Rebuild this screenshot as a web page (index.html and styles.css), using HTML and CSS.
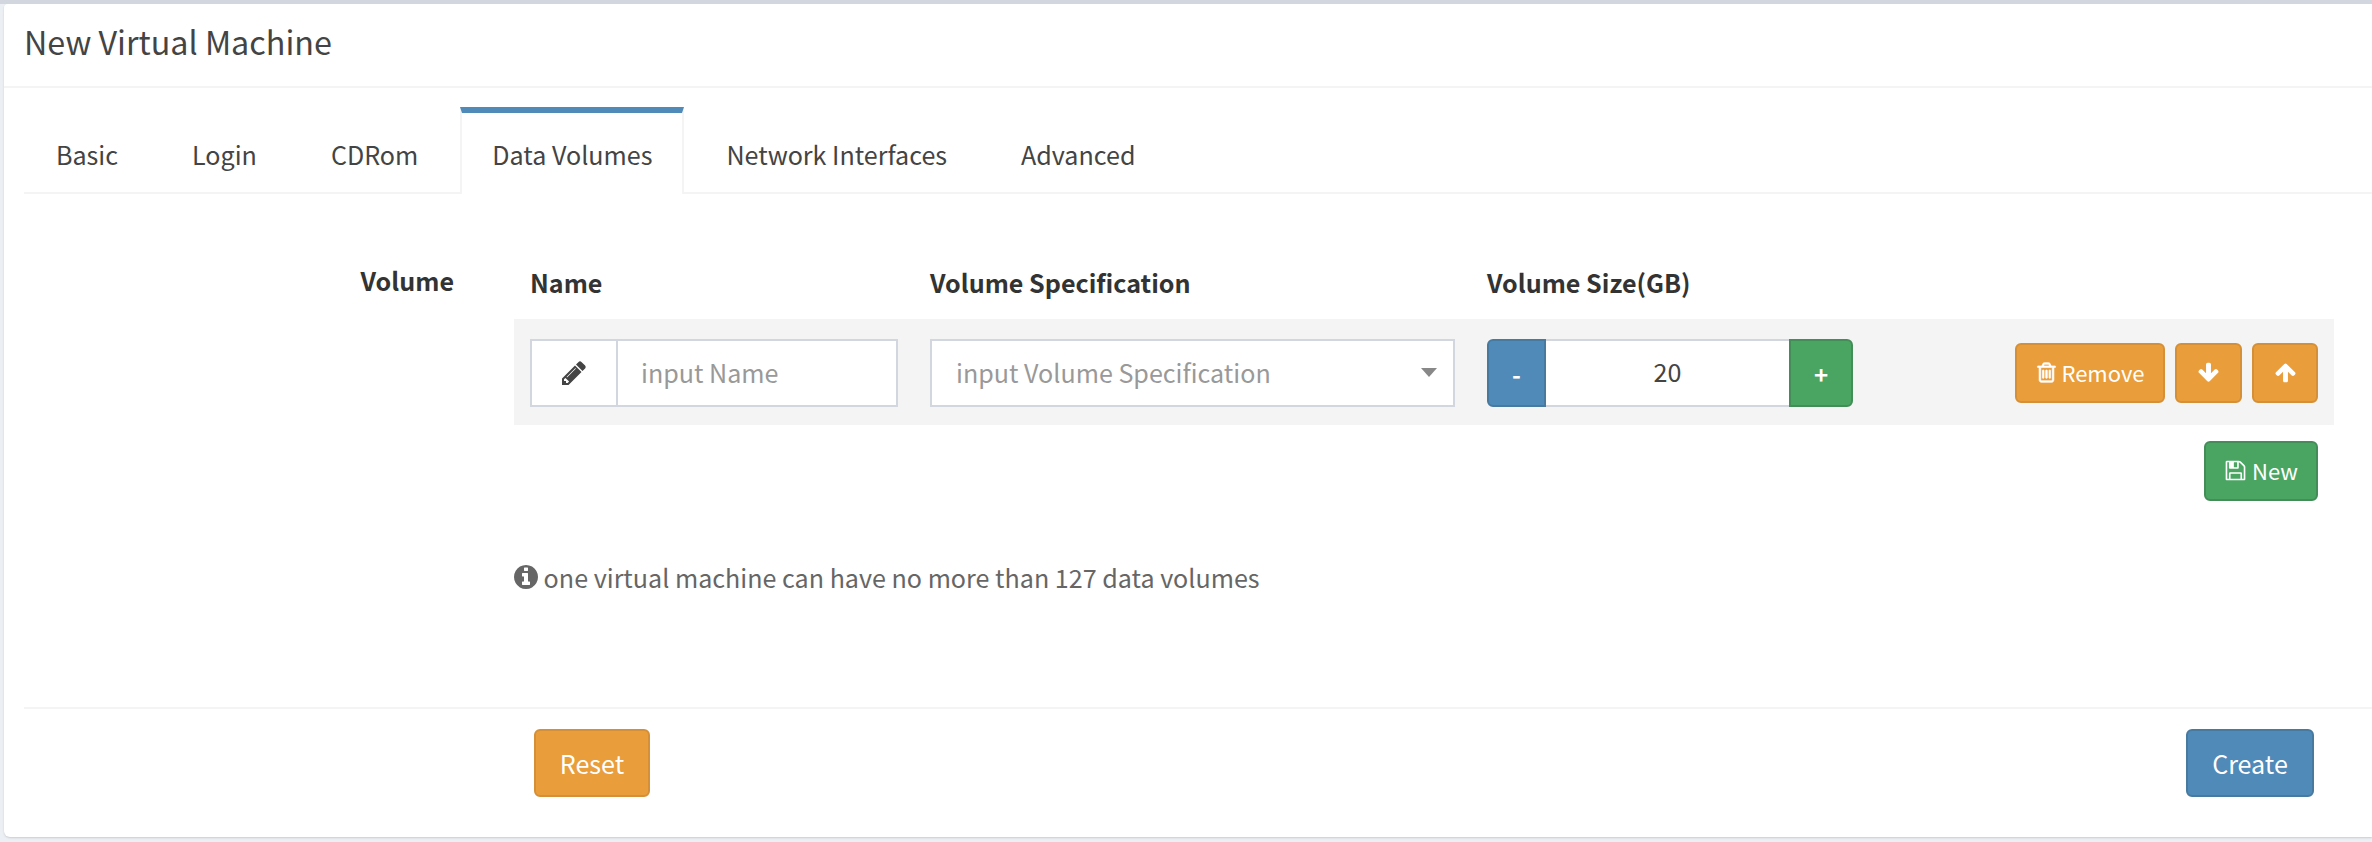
FILE: index.html
```html
<!DOCTYPE html>
<html lang="en">
<head>
    <meta charset="UTF-8">
    <meta name="viewport" content="width=device-width, initial-scale=1.0">
    <title>New Virtual Machine</title>
    <link rel="stylesheet" href="styles.css">
</head>
<body>

<div class="card">
    <div class="card-title">New Virtual Machine</div>

    <div class="tabs">
        <div class="tab">Basic</div>
        <div class="tab">Login</div>
        <div class="tab">CDRom</div>
        <div class="tab active">Data Volumes</div>
        <div class="tab">Network Interfaces</div>
        <div class="tab">Advanced</div>
    </div>

    <div class="form">
        <div class="form-label">Volume</div>
        <div class="form-body">
            <div class="vol-grid vol-head">
                <div>Name</div>
                <div>Volume Specification</div>
                <div>Volume Size(GB)</div>
            </div>

            <div class="vol-grid vol-row">
                <div class="input-group">
                    <span class="addon">
                        <svg class="icon" viewBox="0 0 1792 1792"><path d="M491 1536l91-91-235-235-91 91v107h128v128h107zm523-928q0-22-22-22-10 0-17 7l-542 542q-7 7-7 17 0 22 22 22 10 0 17-7l542-542q7-7 7-17zm-54-192l416 416-832 832h-416v-416zm683 96q0 53-37 90l-166 166-416-416 166-165q36-38 90-38 53 0 91 38l235 234q37 39 37 91z"/></svg>
                    </span>
                    <input class="text-input" type="text" placeholder="input Name">
                </div>
                <div class="select">
                    <span>input Volume Specification</span>
                    <span class="caret"></span>
                </div>
                <div class="spinner">
                    <button class="btn-blue spin-minus">-</button>
                    <div class="spin-value">20</div>
                    <button class="btn-green spin-plus">+</button>
                </div>
                <div class="actions">
                    <button class="btn btn-orange btn-remove">
                        <svg class="icon icon-bold" viewBox="0 0 1792 1792"><path d="M704 736v576q0 14-9 23t-23 9h-64q-14 0-23-9t-9-23v-576q0-14 9-23t23-9h64q14 0 23 9t9 23zm256 0v576q0 14-9 23t-23 9h-64q-14 0-23-9t-9-23v-576q0-14 9-23t23-9h64q14 0 23 9t9 23zm256 0v576q0 14-9 23t-23 9h-64q-14 0-23-9t-9-23v-576q0-14 9-23t23-9h64q14 0 23 9t9 23zm128 724v-948h-896v948q0 22 7 40.5t14.5 27 10.5 8.5h832q3 0 10.5-8.5t14.5-27 7-40.5zm-672-1076h448l-48-117q-7-9-17-11h-317q-10 2-17 11zm928 32v64q0 14-9 23t-23 9h-96v948q0 83-47 143.5t-113 60.5h-832q-66 0-113-58.5t-47-141.5v-952h-96q-14 0-23-9t-9-23v-64q0-14 9-23t23-9h309l70-167q15-37 54-63t79-26h320q40 0 79 26t54 63l70 167h309q14 0 23 9t9 23z"/></svg>
                        Remove
                    </button>
                    <button class="btn btn-orange btn-arrow">
                        <svg class="icon" viewBox="0 0 1792 1792"><path d="M1675 832q0 53-37 90l-651 652q-39 37-91 37-53 0-90-37l-651-652q-38-36-38-90 0-53 38-91l74-75q39-37 91-37 53 0 90 37l294 294v-704q0-52 38-90t90-38h128q52 0 90 38t38 90v704l294-294q37-37 90-37 52 0 91 37l75 75q37 39 37 91z"/></svg>
                    </button>
                    <button class="btn btn-orange btn-arrow btn-up">
                        <svg class="icon" viewBox="0 0 1792 1792"><path d="M1675 971q0 51-37 90l-75 75q-38 38-91 38-54 0-90-38l-294-293v704q0 52-37.5 84.5t-90.5 32.5h-128q-53 0-90.5-32.5t-37.5-84.5v-704l-294 293q-36 38-90 38t-90-38l-75-75q-38-38-38-90 0-53 38-91l651-651q35-37 90-37 54 0 91 37l651 651q37 39 37 91z"/></svg>
                    </button>
                </div>
            </div>

            <div class="new-row">
                <button class="btn btn-green">
                    <svg class="icon" viewBox="0 0 1792 1792"><path d="M512 1536h768v-384h-768v384zm896 0h128v-896q0-14-10-38.5t-20-34.5l-281-281q-10-10-34-20t-39-10v416q0 40-28 68t-68 28h-576q-40 0-68-28t-28-68v-416h-128v1280h128v-416q0-40 28-68t68-28h832q40 0 68 28t28 68v416zm-384-928v-320q0-13-9.5-22.5t-22.5-9.5h-192q-13 0-22.5 9.5t-9.5 22.5v320q0 13 9.5 22.5t22.5 9.5h192q13 0 22.5-9.5t9.5-22.5zm640 32v928q0 40-28 68t-68 28h-1344q-40 0-68-28t-28-68v-1344q0-40 28-68t68-28h928q40 0 88 20t76 48l280 280q28 28 48 76t20 88z"/></svg>
                    New
                </button>
            </div>

            <div class="note">
                <svg class="icon" viewBox="0 0 1792 1792"><path d="M1152 1376v-160q0-14-9-23t-23-9h-96v-512q0-14-9-23t-23-9h-320q-14 0-23 9t-9 23v160q0 14 9 23t23 9h96v320h-96q-14 0-23 9t-9 23v160q0 14 9 23t23 9h448q14 0 23-9t9-23zm-128-896v-160q0-14-9-23t-23-9h-192q-14 0-23 9t-9 23v160q0 14 9 23t23 9h192q14 0 23-9t9-23zm640 416q0 209-103 385.5t-279.5 279.5-385.5 103-385.5-103-279.5-279.5-103-385.5 103-385.5 279.5-279.5 385.5-103 385.5 103 279.5 279.5 103 385.5z"/></svg>
                one virtual machine can have no more than 127 data volumes
            </div>
        </div>
    </div>

    <div class="card-footer">
        <button class="btn-large btn-orange">Reset</button>
        <button class="btn-large btn-blue">Create</button>
    </div>
</div>

</body>
</html>
```

FILE: styles.css
```css
* {
    box-sizing: border-box;
}
html, body {
    height: 100%;
}
body {
    margin: 0;
    padding-left: 4px;
    overflow: hidden;
    background-color: #ecf0f5;
    border-top: 4px solid #d2d6de;
    font-family: "Noto Sans CJK SC", "Noto Sans", sans-serif;
    font-size: 25.1px;
    color: #444;
}
button {
    font-family: inherit;
    cursor: pointer;
}
.icon {
    fill: currentColor;
    width: 1em;
    height: 1em;
}
.icon-bold {
    stroke: currentColor;
    stroke-width: 50;
}
.card {
    height: 833px;
    background-color: #fff;
    border-radius: 4px 0 0 6px;
    box-shadow: 0 1px 2px rgba(0, 0, 0, 0.15);
    padding-left: 20px;
}
.card-title {
    height: 84px;
    margin-left: -20px;
    padding-left: 20px;
    border-bottom: 2px solid #f4f4f4;
    font-size: 32.3px;
    line-height: 48px;
    padding-top: 13px;
}
.tabs {
    display: flex;
    height: 87px;
    margin-top: 19px;
    border-bottom: 2px solid #f4f4f4;
}
.tab {
    height: 87px;
    margin-right: 10px;
    padding: 22px 32px 0;
    border-top: 6px solid transparent;
    line-height: 38px;
}
.tab.active {
    background-color: #fff;
    border-top-color: #4f8ab8;
    border-left: 2px solid #f4f4f4;
    border-right: 2px solid #f4f4f4;
    padding: 22px 30px 0;
}
.form {
    display: flex;
    height: 513px;
}
.form-label {
    width: 490px;
    padding: 67px 60px 0 0;
    text-align: right;
    font-weight: bold;
    line-height: 38px;
    color: #333;
}
.form-body {
    width: 1820px;
}
.vol-grid {
    display: grid;
    grid-template-columns: 368px 525px 366px 1fr;
    column-gap: 32px;
    padding: 0 16px;
    align-items: center;
}
.vol-head {
    height: 125px;
    padding-top: 69px;
    font-weight: bold;
    line-height: 38px;
    align-items: start;
    color: #333;
}
.vol-row {
    height: 106px;
    padding-top: 2px;
    background-color: #f4f4f5;
}
.input-group {
    display: flex;
    height: 68px;
    background-color: #fff;
    border: 2px solid #d2d6de;
}
.addon {
    display: flex;
    align-items: center;
    justify-content: center;
    width: 86px;
    border-right: 2px solid #d2d6de;
    font-size: 28px;
}
.text-input {
    flex: 1;
    min-width: 0;
    padding: 0 23px 2px;
    border: none;
    font-family: inherit;
    font-size: 25.1px;
    color: #444;
}
.text-input::placeholder {
    color: #999;
    opacity: 1;
}
.select {
    display: flex;
    align-items: center;
    justify-content: space-between;
    height: 68px;
    padding: 0 16px 2px 24px;
    background-color: #fff;
    border: 2px solid #d2d6de;
    color: #999;
}
.caret {
    width: 0;
    height: 0;
    border-left: 8px solid transparent;
    border-right: 8px solid transparent;
    border-top: 9px solid #888;
}
.spinner {
    display: flex;
    height: 68px;
}
.spinner button {
    color: #fff;
    font-size: 24px;
    font-weight: bold;
}
.spin-minus {
    width: 59px;
    border-radius: 6px 0 0 6px;
}
.spin-plus {
    width: 64px;
    border-radius: 0 6px 6px 0;
}
.spin-value {
    flex: 1;
    background-color: #fff;
    border-top: 2px solid #d2d6de;
    border-bottom: 2px solid #d2d6de;
    text-align: center;
    line-height: 60px;
}
.actions {
    display: flex;
    justify-content: flex-end;
    gap: 10px;
}
.btn {
    display: inline-flex;
    align-items: center;
    justify-content: center;
    gap: 5px;
    height: 60px;
    padding: 0 0 2px;
    border-radius: 6px;
    font-size: 22px;
    color: #fff;
}
.btn .icon {
    width: 23px;
    height: 23px;
}
.btn-remove {
    width: 150px;
    gap: 3px;
}
.btn-arrow {
    width: 67px;
}
.btn-up {
    width: 66px;
}
.btn-orange {
    background-color: #e99d3b;
    border: 2px solid #d58f37;
    color: #fff;
}
.btn-blue {
    background-color: #4f8ab8;
    border: 2px solid #48799f;
    color: #fff;
}
.btn-green {
    background-color: #4aa563;
    border: 2px solid #448d59;
    color: #fff;
}
.new-row {
    display: flex;
    justify-content: flex-end;
    padding: 16px 16px 0 0;
}
.new-row .btn {
    width: 114px;
}
.note {
    margin-top: 57px;
    color: #666;
    line-height: 38px;
}
.note .icon {
    vertical-align: -3px;
    width: 28px;
    height: 28px;
    margin-left: -2px;
    margin-right: -2px;
}
.card-footer {
    display: flex;
    justify-content: space-between;
    height: 130px;
    padding: 20px 58px 0 510px;
    border-top: 2px solid #f4f4f4;
}
.btn-large {
    height: 68px;
    padding: 0;
    border-radius: 6px;
    font-size: 25.1px;
    width: 116px;
}
.btn-large.btn-blue {
    width: 128px;
}
```
